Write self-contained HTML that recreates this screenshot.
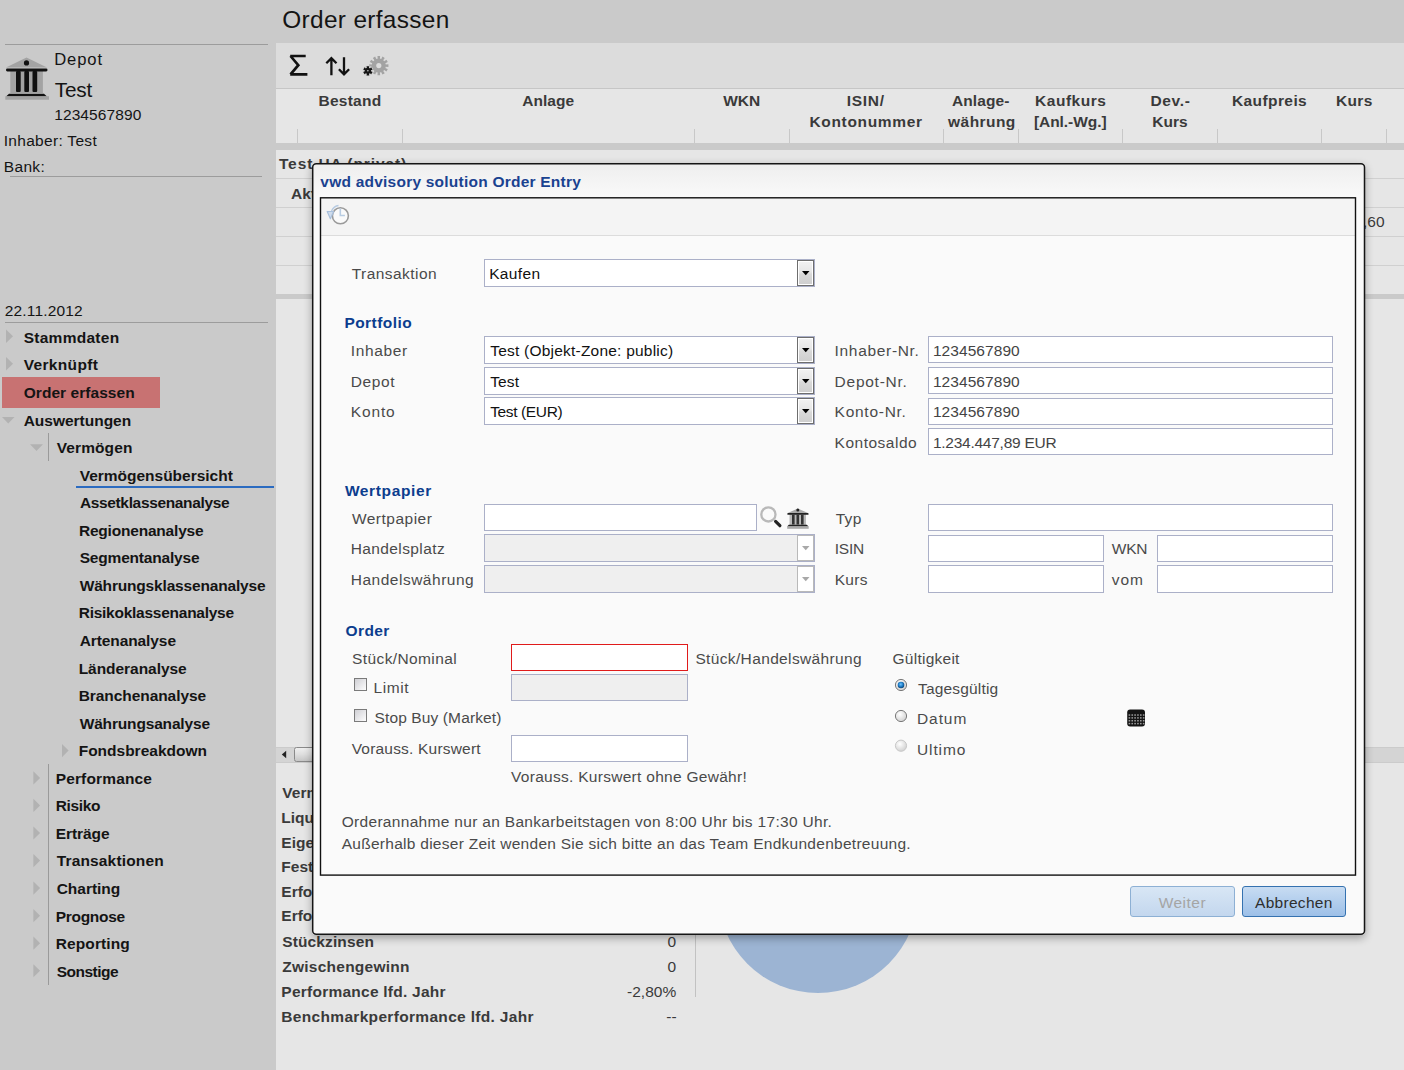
<!DOCTYPE html>
<html><head><meta charset="utf-8">
<style>
html,body{margin:0;padding:0;}
body{width:1404px;height:1070px;overflow:hidden;position:relative;background:#cacaca;font-family:"Liberation Sans",sans-serif;}
.t{position:absolute;white-space:pre;line-height:1;}
.a{position:absolute;box-sizing:border-box;}
</style></head><body>
<!-- main panels -->
<div class="a" style="left:276px;top:43px;width:1128px;height:45px;background:#dcdcdc"></div>
<div class="a" style="left:276px;top:88px;width:1128px;height:1px;background:#c6c6c6"></div>
<div class="a" style="left:276px;top:89px;width:1128px;height:54px;background:#e6e6e6"></div>
<div class="a" style="left:297px;top:129px;width:1px;height:14px;background:#c8c8c8"></div>
<div class="a" style="left:402px;top:129px;width:1px;height:14px;background:#c8c8c8"></div>
<div class="a" style="left:694px;top:129px;width:1px;height:14px;background:#c8c8c8"></div>
<div class="a" style="left:789px;top:129px;width:1px;height:14px;background:#c8c8c8"></div>
<div class="a" style="left:943px;top:129px;width:1px;height:14px;background:#c8c8c8"></div>
<div class="a" style="left:1018px;top:129px;width:1px;height:14px;background:#c8c8c8"></div>
<div class="a" style="left:1122px;top:129px;width:1px;height:14px;background:#c8c8c8"></div>
<div class="a" style="left:1217px;top:129px;width:1px;height:14px;background:#c8c8c8"></div>
<div class="a" style="left:1321px;top:129px;width:1px;height:14px;background:#c8c8c8"></div>
<div class="a" style="left:1386px;top:129px;width:1px;height:14px;background:#c8c8c8"></div>
<div class="a" style="left:276px;top:150px;width:1128px;height:144px;background:#e6e6e6"></div>
<div class="a" style="left:276px;top:178px;width:1128px;height:1px;background:#d0d0d0"></div>
<div class="a" style="left:276px;top:207px;width:1128px;height:1px;background:#d0d0d0"></div>
<div class="a" style="left:276px;top:236px;width:1128px;height:1px;background:#d0d0d0"></div>
<div class="a" style="left:276px;top:265px;width:1128px;height:1px;background:#d0d0d0"></div>
<div class="a" style="left:276px;top:299px;width:1128px;height:771px;background:#e6e6e6"></div>
<!-- scrollbar -->
<div class="a" style="left:276px;top:747px;width:1128px;height:16px;background:#d4d4d4;border-top:1px solid #cbcbcb;border-bottom:1px solid #cbcbcb"></div>
<svg class="a" style="left:276px;top:745px" width="40" height="20"><path d="M10.2 5.8 L5.8 9.5 L10.2 13.2 Z" fill="#222"/><rect x="18.5" y="2.5" width="40" height="14" rx="2" fill="url(#thg)" stroke="#8a8a8a"/>
<defs><linearGradient id="thg" x1="0" y1="0" x2="0" y2="1"><stop offset="0" stop-color="#f0f0f0"/><stop offset="0.5" stop-color="#dedede"/><stop offset="1" stop-color="#c4c4c4"/></linearGradient></defs></svg>
<!-- summary vline + pie -->
<div class="a" style="left:695px;top:780px;width:1px;height:217px;background:#c2c2c2"></div>
<div class="a" style="left:718px;top:793px;width:200px;height:200px;border-radius:50%;background:#9cb4d3"></div>
<!-- sidebar lines -->
<div class="a" style="left:5px;top:44px;width:263px;height:1px;background:#9c9c9c"></div>
<div class="a" style="left:10px;top:176px;width:252px;height:1px;background:#9c9c9c"></div>
<div class="a" style="left:5px;top:322px;width:263px;height:1px;background:#9c9c9c"></div>
<div class="a" style="left:2px;top:377px;width:158px;height:31px;background:#c87272"></div>
<div class="a" style="left:76px;top:486px;width:198px;height:2px;background:#2b6bc0"></div>
<div class="a" style="left:48px;top:433px;width:1px;height:28px;background:#9a9a9a"></div>
<div class="a" style="left:48px;top:764px;width:1px;height:221px;background:#9a9a9a"></div>
<svg class="a" style="left:0;top:320px" width="80" height="680">
<g fill="#b2b2b2">
<path d="M6 9.5 L13 16.2 L6 23 Z"/>
<path d="M6 37 L13 43.8 L6 50.6 Z"/>
<path d="M2 97 L14.5 97 L8.25 103.6 Z"/>
<path d="M30 124.3 L43 124.3 L36.5 131 Z"/>
<path d="M62 424 L68.6 430.6 L62 437.2 Z"/>
</g>
<g fill="#b2b2b2"><path d="M33.4 451.30 L40.1 457.90 L33.4 464.50 Z"/><path d="M33.4 478.85 L40.1 485.45 L33.4 492.05 Z"/><path d="M33.4 506.40 L40.1 513.00 L33.4 519.60 Z"/><path d="M33.4 533.95 L40.1 540.55 L33.4 547.15 Z"/><path d="M33.4 561.50 L40.1 568.10 L33.4 574.70 Z"/><path d="M33.4 589.05 L40.1 595.65 L33.4 602.25 Z"/><path d="M33.4 616.60 L40.1 623.20 L33.4 629.80 Z"/><path d="M33.4 644.15 L40.1 650.75 L33.4 657.35 Z"/></g>
</svg>
<!-- bank icon -->
<svg class="a" style="left:0;top:52px" width="54" height="54" viewBox="0 0 54 54">
<path d="M26.5 5.6 L47 15.6 L6 15.6 Z" fill="#a3a3a3"/>
<circle cx="26.5" cy="10.9" r="2.6" fill="#111"/>
<rect x="10.3" y="19" width="32.6" height="22" fill="#a3a3a3"/>
<rect x="6" y="16.6" width="41.5" height="2.8" rx="1.3" fill="#111"/>
<rect x="16" y="19" width="4.7" height="21" rx="1" fill="#111"/>
<rect x="24.3" y="19" width="4.7" height="21" rx="1" fill="#111"/>
<rect x="32.5" y="19" width="4.7" height="21" rx="1" fill="#111"/>
<path d="M9 41.8 L44 41.8 L47 44.4 L6 44.4 Z" fill="#111"/>
<rect x="5.3" y="44.2" width="43.7" height="3.5" fill="#a3a3a3"/>
</svg>
<!-- toolbar icons -->
<svg class="a" style="left:284px;top:50px" width="110" height="32" viewBox="0 0 110 32">
<path d="M6.2 6 L21.7 6 M6.2 24.3 L23.4 24.3 M6.5 6 L14.3 15.2 L6.5 24.3" fill="none" stroke="#111" stroke-width="2.7" stroke-linejoin="miter"/>
<path d="M47.4 8.2 L47.4 25.2 M42.3 13.3 L47.4 8.2 L52.5 13.3" fill="none" stroke="#111" stroke-width="2.3"/>
<path d="M60 7.3 L60 24.3 M54.9 19.2 L60 24.3 L65.1 19.2" fill="none" stroke="#111" stroke-width="2.3"/>
<path d="M101.56 13.79 L101.71 14.47 L104.41 14.28 L104.41 16.92 L101.71 16.73 L101.56 17.41 L101.35 18.07 L103.78 19.27 L102.46 21.55 L100.22 20.03 L99.75 20.55 L99.23 21.02 L100.75 23.26 L98.47 24.58 L97.27 22.15 L96.61 22.36 L95.93 22.51 L96.12 25.21 L93.48 25.21 L93.67 22.51 L92.99 22.36 L92.33 22.15 L91.13 24.58 L88.85 23.26 L90.37 21.02 L89.85 20.55 L89.38 20.03 L87.14 21.55 L85.82 19.27 L88.25 18.07 L88.04 17.41 L87.89 16.73 L85.19 16.92 L85.19 14.28 L87.89 14.47 L88.04 13.79 L88.25 13.13 L85.82 11.93 L87.14 9.65 L89.38 11.17 L89.85 10.65 L90.37 10.18 L88.85 7.94 L91.13 6.62 L92.33 9.05 L92.99 8.84 L93.67 8.69 L93.48 5.99 L96.12 5.99 L95.93 8.69 L96.61 8.84 L97.27 9.05 L98.47 6.62 L100.75 7.94 L99.23 10.18 L99.75 10.65 L100.22 11.17 L102.46 9.65 L103.78 11.93 L101.35 13.13 Z M97.40 15.60 A2.6 2.6 0 1 0 92.20 15.60 A2.6 2.6 0 1 0 97.40 15.60 Z" fill="#a3a3a3" fill-rule="evenodd"/><circle cx="83.9" cy="20.8" r="5.4" fill="#d2d2d2"/><path d="M82.35 18.12 L82.87 17.88 L82.54 16.20 L85.26 16.20 L84.93 17.88 L85.45 18.12 L85.91 18.44 L87.20 17.32 L88.57 19.68 L86.95 20.24 L87.00 20.80 L86.95 21.36 L88.57 21.92 L87.20 24.28 L85.91 23.16 L85.45 23.48 L84.93 23.72 L85.26 25.40 L82.54 25.40 L82.87 23.72 L82.35 23.48 L81.89 23.16 L80.60 24.28 L79.23 21.92 L80.85 21.36 L80.80 20.80 L80.85 20.24 L79.23 19.68 L80.60 17.32 L81.89 18.44 Z M84.70 20.80 A0.8 0.8 0 1 0 83.10 20.80 A0.8 0.8 0 1 0 84.70 20.80 Z" fill="#151515" fill-rule="evenodd"/>
</svg>

<div class="t" style="left:282.3px;top:7.9px;font-size:24.4px;font-weight:normal;color:#141414;letter-spacing:0.330px">Order erfassen</div>
<div class="t" style="left:54.2px;top:51.9px;font-size:16.6px;font-weight:normal;color:#141414;letter-spacing:0.883px">Depot</div>
<div class="t" style="left:54.7px;top:79.9px;font-size:20.8px;font-weight:normal;color:#141414;letter-spacing:-0.154px">Test</div>
<div class="t" style="left:54.2px;top:106.5px;font-size:15.5px;font-weight:normal;color:#141414;letter-spacing:0.102px">1234567890</div>
<div class="t" style="left:3.7px;top:133.0px;font-size:15.5px;font-weight:normal;color:#141414;letter-spacing:0.308px">Inhaber: Test</div>
<div class="t" style="left:3.7px;top:158.5px;font-size:15.5px;font-weight:normal;color:#141414;letter-spacing:0.368px">Bank:</div>
<div class="t" style="left:4.7px;top:303.0px;font-size:15.5px;font-weight:normal;color:#141414;letter-spacing:0.177px">22.11.2012</div>
<div class="t" style="left:23.7px;top:329.9px;font-size:15.5px;font-weight:bold;color:#141414;letter-spacing:0.272px">Stammdaten</div>
<div class="t" style="left:23.7px;top:357.4px;font-size:15.5px;font-weight:bold;color:#141414;letter-spacing:0.335px">Verknüpft</div>
<div class="t" style="left:23.7px;top:385.0px;font-size:15.5px;font-weight:bold;color:#141414;letter-spacing:0.053px">Order erfassen</div>
<div class="t" style="left:23.7px;top:412.5px;font-size:15.5px;font-weight:bold;color:#141414;letter-spacing:-0.016px">Auswertungen</div>
<div class="t" style="left:56.7px;top:440.1px;font-size:15.5px;font-weight:bold;color:#141414;letter-spacing:0.104px">Vermögen</div>
<div class="t" style="left:79.7px;top:467.6px;font-size:15.5px;font-weight:bold;color:#141414;letter-spacing:-0.010px">Vermögensübersicht</div>
<div class="t" style="left:79.9px;top:495.2px;font-size:15.5px;font-weight:bold;color:#141414;letter-spacing:-0.347px">Assetklassenanalyse</div>
<div class="t" style="left:78.9px;top:522.8px;font-size:15.5px;font-weight:bold;color:#141414;letter-spacing:-0.198px">Regionenanalyse</div>
<div class="t" style="left:79.7px;top:550.3px;font-size:15.5px;font-weight:bold;color:#141414;letter-spacing:-0.186px">Segmentanalyse</div>
<div class="t" style="left:79.7px;top:577.9px;font-size:15.5px;font-weight:bold;color:#141414;letter-spacing:-0.176px">Währungsklassenanalyse</div>
<div class="t" style="left:78.7px;top:605.4px;font-size:15.5px;font-weight:bold;color:#141414;letter-spacing:-0.255px">Risikoklassenanalyse</div>
<div class="t" style="left:79.7px;top:633.0px;font-size:15.5px;font-weight:bold;color:#141414;letter-spacing:-0.094px">Artenanalyse</div>
<div class="t" style="left:78.7px;top:660.5px;font-size:15.5px;font-weight:bold;color:#141414;letter-spacing:-0.044px">Länderanalyse</div>
<div class="t" style="left:78.7px;top:688.0px;font-size:15.5px;font-weight:bold;color:#141414;letter-spacing:-0.068px">Branchenanalyse</div>
<div class="t" style="left:79.7px;top:715.6px;font-size:15.5px;font-weight:bold;color:#141414;letter-spacing:-0.166px">Währungsanalyse</div>
<div class="t" style="left:78.7px;top:743.1px;font-size:15.5px;font-weight:bold;color:#141414;letter-spacing:-0.004px">Fondsbreakdown</div>
<div class="t" style="left:55.7px;top:770.7px;font-size:15.5px;font-weight:bold;color:#141414;letter-spacing:0.146px">Performance</div>
<div class="t" style="left:55.7px;top:798.2px;font-size:15.5px;font-weight:bold;color:#141414;letter-spacing:-0.349px">Risiko</div>
<div class="t" style="left:55.7px;top:825.8px;font-size:15.5px;font-weight:bold;color:#141414;letter-spacing:-0.059px">Erträge</div>
<div class="t" style="left:56.7px;top:853.4px;font-size:15.5px;font-weight:bold;color:#141414;letter-spacing:0.157px">Transaktionen</div>
<div class="t" style="left:56.7px;top:880.9px;font-size:15.5px;font-weight:bold;color:#141414;letter-spacing:-0.021px">Charting</div>
<div class="t" style="left:55.7px;top:908.5px;font-size:15.5px;font-weight:bold;color:#141414;letter-spacing:-0.295px">Prognose</div>
<div class="t" style="left:55.7px;top:936.0px;font-size:15.5px;font-weight:bold;color:#141414;letter-spacing:0.110px">Reporting</div>
<div class="t" style="left:56.7px;top:963.5px;font-size:15.5px;font-weight:bold;color:#141414;letter-spacing:-0.504px">Sonstige</div>
<div class="t" style="left:318.5px;top:92.7px;font-size:15.5px;font-weight:bold;color:#3a3a3a;letter-spacing:0.253px">Bestand</div>
<div class="t" style="left:522.3px;top:92.7px;font-size:15.5px;font-weight:bold;color:#3a3a3a;letter-spacing:0.009px">Anlage</div>
<div class="t" style="left:723.3px;top:92.7px;font-size:15.5px;font-weight:bold;color:#3a3a3a;letter-spacing:-0.062px">WKN</div>
<div class="t" style="left:846.7px;top:92.7px;font-size:15.5px;font-weight:bold;color:#3a3a3a;letter-spacing:0.714px">ISIN/</div>
<div class="t" style="left:809.5px;top:114.3px;font-size:15.5px;font-weight:bold;color:#3a3a3a;letter-spacing:0.662px">Kontonummer</div>
<div class="t" style="left:952.0px;top:92.7px;font-size:15.5px;font-weight:bold;color:#3a3a3a;letter-spacing:0.087px">Anlage-</div>
<div class="t" style="left:948.1px;top:114.3px;font-size:15.5px;font-weight:bold;color:#3a3a3a;letter-spacing:0.431px">währung</div>
<div class="t" style="left:1035.1px;top:92.7px;font-size:15.5px;font-weight:bold;color:#3a3a3a;letter-spacing:0.519px">Kaufkurs</div>
<div class="t" style="left:1033.9px;top:114.3px;font-size:15.5px;font-weight:bold;color:#3a3a3a;letter-spacing:-0.056px">[Anl.-Wg.]</div>
<div class="t" style="left:1150.5px;top:92.7px;font-size:15.5px;font-weight:bold;color:#3a3a3a;letter-spacing:0.652px">Dev.-</div>
<div class="t" style="left:1152.2px;top:114.3px;font-size:15.5px;font-weight:bold;color:#3a3a3a;letter-spacing:0.069px">Kurs</div>
<div class="t" style="left:1232.0px;top:92.7px;font-size:15.5px;font-weight:bold;color:#3a3a3a;letter-spacing:0.404px">Kaufpreis</div>
<div class="t" style="left:1336.0px;top:92.7px;font-size:15.5px;font-weight:bold;color:#3a3a3a;letter-spacing:0.335px">Kurs</div>
<div class="t" style="left:278.9px;top:156.4px;font-size:15.5px;font-weight:bold;color:#3a3a3a;letter-spacing:0.914px">Test HA (privat)</div>
<div class="t" style="left:291.1px;top:185.7px;font-size:15.5px;font-weight:bold;color:#3a3a3a;letter-spacing:0.000px">Aktien</div>
<div class="t" style="right:19.4px;top:213.5px;font-size:15.5px;font-weight:normal;color:#3a3a3a">1.234,60</div>
<div class="t" style="left:282.3px;top:784.5px;font-size:15.5px;font-weight:bold;color:#3a3a3a;letter-spacing:0.000px">Vermögen</div>
<div class="t" style="left:281.3px;top:809.7px;font-size:15.5px;font-weight:bold;color:#3a3a3a;letter-spacing:0.000px">Liquidität</div>
<div class="t" style="left:281.3px;top:835.0px;font-size:15.5px;font-weight:bold;color:#3a3a3a;letter-spacing:0.000px">Eigenkapital</div>
<div class="t" style="left:281.3px;top:858.8px;font-size:15.5px;font-weight:bold;color:#3a3a3a;letter-spacing:0.000px">Festgeld</div>
<div class="t" style="left:281.3px;top:884.0px;font-size:15.5px;font-weight:bold;color:#3a3a3a;letter-spacing:0.000px">Erfolg realisiert</div>
<div class="t" style="left:281.3px;top:907.8px;font-size:15.5px;font-weight:bold;color:#3a3a3a;letter-spacing:0.000px">Erfolg unrealisiert</div>
<div class="t" style="left:282.3px;top:933.5px;font-size:15.5px;font-weight:bold;color:#3a3a3a;letter-spacing:0.113px">Stückzinsen</div>
<div class="t" style="left:282.3px;top:958.5px;font-size:15.5px;font-weight:bold;color:#3a3a3a;letter-spacing:0.243px">Zwischengewinn</div>
<div class="t" style="left:281.3px;top:983.8px;font-size:15.5px;font-weight:bold;color:#3a3a3a;letter-spacing:0.244px">Performance lfd. Jahr</div>
<div class="t" style="left:281.3px;top:1008.8px;font-size:15.5px;font-weight:bold;color:#3a3a3a;letter-spacing:0.321px">Benchmarkperformance lfd. Jahr</div>
<div class="t" style="right:728.0px;top:933.5px;font-size:15.5px;font-weight:normal;color:#3a3a3a">0</div>
<div class="t" style="right:728.0px;top:958.5px;font-size:15.5px;font-weight:normal;color:#3a3a3a">0</div>
<div class="t" style="right:727.8px;top:983.8px;font-size:15.5px;font-weight:normal;color:#3a3a3a">-2,80%</div>
<div class="t" style="right:727.4px;top:1008.8px;font-size:15.5px;font-weight:normal;color:#3a3a3a">--</div>
<div class="a" style="left:312px;top:163px;width:1053px;height:772px;border-radius:4px;box-shadow:0 3px 8px rgba(0,0,0,0.33);background:linear-gradient(#eeeeee 0px,#f8f8f8 30px,#fafafa 36px,#fafafa 100%)"></div>
<div class="a" style="left:321px;top:198px;width:1034px;height:677px;background:#fafafa"></div>
<div class="a" style="left:321px;top:198px;width:1034px;height:38px;background:#f4f4f4;border-bottom:1px solid #dcdcdc"></div>
<svg class="a" style="left:0;top:0" width="1404" height="1070"><rect x="312.7" y="163.8" width="1051.8" height="770.4" rx="3.5" fill="none" stroke="#151515" stroke-width="1.5"/><rect x="320.5" y="197.8" width="1035" height="677.3" fill="none" stroke="#111" stroke-width="1.4"/></svg>
<svg class="a" style="left:322px;top:200px" width="34" height="34" viewBox="0 0 34 34">
<circle cx="18.4" cy="15.8" r="8.0" fill="#fafafa" stroke="#9a9a9a" stroke-width="1.6"/>
<path d="M18.3 8.5 L18.3 15.5 L22.9 15.5" fill="none" stroke="#b9cde3" stroke-width="1.6"/>
<path d="M5.2 11.5 L11.6 11.5 L8.4 18.8 Z" fill="#cfdcec" stroke="#a9c0dc" stroke-width="1.2" stroke-linejoin="round"/>
<path d="M9.5 11 Q12 6 16.5 5.6" fill="none" stroke="#b7cbe2" stroke-width="1.5"/>
</svg>
<div class="a" style="left:484px;top:259px;width:331px;height:28px;border:1px solid #abb0c8;background:#fff"></div><div class="a" style="left:797px;top:260px;width:17px;height:26px;border:1px solid #6e6e6e;background:#fff"></div><div class="a" style="left:799px;top:262px;width:13px;height:22px;background:linear-gradient(#f1f1f1 0%,#e6e6e6 45%,#d9d9d9 55%,#cfcfcf 100%)"></div><svg class="a" style="left:802px;top:271px" width="8" height="5"><path d="M0 0 L7.5 0 L3.75 4.3 Z" fill="#000"/></svg>
<div class="a" style="left:484px;top:336px;width:331px;height:28px;border:1px solid #abb0c8;background:#fff"></div><div class="a" style="left:797px;top:337px;width:17px;height:26px;border:1px solid #6e6e6e;background:#fff"></div><div class="a" style="left:799px;top:339px;width:13px;height:22px;background:linear-gradient(#f1f1f1 0%,#e6e6e6 45%,#d9d9d9 55%,#cfcfcf 100%)"></div><svg class="a" style="left:802px;top:348px" width="8" height="5"><path d="M0 0 L7.5 0 L3.75 4.3 Z" fill="#000"/></svg>
<div class="a" style="left:484px;top:367px;width:331px;height:28px;border:1px solid #abb0c8;background:#fff"></div><div class="a" style="left:797px;top:368px;width:17px;height:26px;border:1px solid #6e6e6e;background:#fff"></div><div class="a" style="left:799px;top:370px;width:13px;height:22px;background:linear-gradient(#f1f1f1 0%,#e6e6e6 45%,#d9d9d9 55%,#cfcfcf 100%)"></div><svg class="a" style="left:802px;top:379px" width="8" height="5"><path d="M0 0 L7.5 0 L3.75 4.3 Z" fill="#000"/></svg>
<div class="a" style="left:484px;top:397px;width:331px;height:28px;border:1px solid #abb0c8;background:#fff"></div><div class="a" style="left:797px;top:398px;width:17px;height:26px;border:1px solid #6e6e6e;background:#fff"></div><div class="a" style="left:799px;top:400px;width:13px;height:22px;background:linear-gradient(#f1f1f1 0%,#e6e6e6 45%,#d9d9d9 55%,#cfcfcf 100%)"></div><svg class="a" style="left:802px;top:409px" width="8" height="5"><path d="M0 0 L7.5 0 L3.75 4.3 Z" fill="#000"/></svg>
<div class="a" style="left:928px;top:336px;width:405px;height:27px;border:1px solid #abb0c8;background:#fff"></div>
<div class="a" style="left:928px;top:367px;width:405px;height:27px;border:1px solid #abb0c8;background:#fff"></div>
<div class="a" style="left:928px;top:398px;width:405px;height:27px;border:1px solid #abb0c8;background:#fff"></div>
<div class="a" style="left:928px;top:428px;width:405px;height:27px;border:1px solid #abb0c8;background:#fff"></div>
<div class="a" style="left:484px;top:504px;width:273px;height:27px;border:1px solid #abb0c8;background:#fff"></div>
<div class="a" style="left:484px;top:534px;width:331px;height:28px;border:1px solid #abb0c8;background:#efefef"></div><div class="a" style="left:797px;top:535px;width:17px;height:26px;border:1px solid #b9b9b9;background:#fff"></div><div class="a" style="left:799px;top:537px;width:13px;height:22px;background:#fff"></div><svg class="a" style="left:802px;top:546px" width="8" height="5"><path d="M0 0 L7.5 0 L3.75 4.3 Z" fill="#a8a8a8"/></svg>
<div class="a" style="left:484px;top:565px;width:331px;height:28px;border:1px solid #abb0c8;background:#efefef"></div><div class="a" style="left:797px;top:566px;width:17px;height:26px;border:1px solid #b9b9b9;background:#fff"></div><div class="a" style="left:799px;top:568px;width:13px;height:22px;background:#fff"></div><svg class="a" style="left:802px;top:577px" width="8" height="5"><path d="M0 0 L7.5 0 L3.75 4.3 Z" fill="#a8a8a8"/></svg>
<div class="a" style="left:928px;top:504px;width:405px;height:27px;border:1px solid #abb0c8;background:#fff"></div>
<div class="a" style="left:928px;top:535px;width:176px;height:27px;border:1px solid #abb0c8;background:#fff"></div>
<div class="a" style="left:1157px;top:535px;width:176px;height:27px;border:1px solid #abb0c8;background:#fff"></div>
<div class="a" style="left:928px;top:565px;width:176px;height:28px;border:1px solid #abb0c8;background:#fff"></div>
<div class="a" style="left:1157px;top:565px;width:176px;height:28px;border:1px solid #abb0c8;background:#fff"></div>
<div class="a" style="left:511px;top:644px;width:177px;height:27px;border:1.5px solid #e01b1b;background:#fff"></div>
<div class="a" style="left:511px;top:674px;width:177px;height:27px;border:1px solid #abb0c8;background:#efefef"></div>
<div class="a" style="left:511px;top:735px;width:177px;height:27px;border:1px solid #abb0c8;background:#fff"></div>
<div class="a" style="left:354px;top:678px;width:13px;height:13px;border:1px solid #7a7a7a;background:linear-gradient(135deg,#cfcfd4,#fdfdfd)"></div>
<div class="a" style="left:354px;top:709px;width:13px;height:13px;border:1px solid #7a7a7a;background:linear-gradient(135deg,#cfcfd4,#fdfdfd)"></div>
<svg class="a" style="left:890px;top:675px" width="24" height="82" viewBox="0 0 24 82">
<defs><radialGradient id="rg" cx="0.4" cy="0.35" r="0.7"><stop offset="0" stop-color="#fff"/><stop offset="1" stop-color="#cfcfcf"/></radialGradient>
<radialGradient id="rb" cx="0.45" cy="0.4" r="0.6"><stop offset="0" stop-color="#6ec3ff"/><stop offset="0.6" stop-color="#1a78c2"/><stop offset="1" stop-color="#0b3f6e"/></radialGradient></defs>
<circle cx="11" cy="10" r="5.6" fill="url(#rg)" stroke="#7a7a7a" stroke-width="1"/>
<circle cx="11" cy="10" r="3.3" fill="url(#rb)"/>
<circle cx="11" cy="41" r="5.6" fill="url(#rg)" stroke="#7a7a7a" stroke-width="1"/>
<circle cx="11" cy="70.7" r="5.6" fill="url(#rg)" stroke="#c8c8c8" stroke-width="1"/>
</svg>
<svg class="a" style="left:1126px;top:708px" width="20" height="20" viewBox="0 0 20 20"><rect x="1.2" y="1.6" width="17.8" height="16.8" rx="3" fill="#141414"/><rect x="2.60" y="6.30" width="1.6" height="1.5" fill="#9a9a9a"/><rect x="5.45" y="6.30" width="1.6" height="1.5" fill="#9a9a9a"/><rect x="8.30" y="6.30" width="1.6" height="1.5" fill="#9a9a9a"/><rect x="11.15" y="6.30" width="1.6" height="1.5" fill="#9a9a9a"/><rect x="14.00" y="6.30" width="1.6" height="1.5" fill="#9a9a9a"/><rect x="16.85" y="6.30" width="1.6" height="1.5" fill="#9a9a9a"/><rect x="2.60" y="9.15" width="1.6" height="1.5" fill="#9a9a9a"/><rect x="5.45" y="9.15" width="1.6" height="1.5" fill="#9a9a9a"/><rect x="8.30" y="9.15" width="1.6" height="1.5" fill="#9a9a9a"/><rect x="11.15" y="9.15" width="1.6" height="1.5" fill="#9a9a9a"/><rect x="14.00" y="9.15" width="1.6" height="1.5" fill="#9a9a9a"/><rect x="16.85" y="9.15" width="1.6" height="1.5" fill="#9a9a9a"/><rect x="2.60" y="12.00" width="1.6" height="1.5" fill="#9a9a9a"/><rect x="5.45" y="12.00" width="1.6" height="1.5" fill="#9a9a9a"/><rect x="8.30" y="12.00" width="1.6" height="1.5" fill="#9a9a9a"/><rect x="11.15" y="12.00" width="1.6" height="1.5" fill="#9a9a9a"/><rect x="14.00" y="12.00" width="1.6" height="1.5" fill="#9a9a9a"/><rect x="16.85" y="12.00" width="1.6" height="1.5" fill="#9a9a9a"/><rect x="2.60" y="14.85" width="1.6" height="1.5" fill="#9a9a9a"/><rect x="5.45" y="14.85" width="1.6" height="1.5" fill="#9a9a9a"/><rect x="8.30" y="14.85" width="1.6" height="1.5" fill="#9a9a9a"/><rect x="11.15" y="14.85" width="1.6" height="1.5" fill="#9a9a9a"/><rect x="14.00" y="14.85" width="1.6" height="1.5" fill="#9a9a9a"/><rect x="16.85" y="14.85" width="1.6" height="1.5" fill="#9a9a9a"/></svg>
<svg class="a" style="left:756px;top:502px" width="58" height="30" viewBox="0 0 58 30">
<circle cx="12.4" cy="12.4" r="7.1" fill="none" stroke="#b9b9b9" stroke-width="2.3"/>
<path d="M19.6 19.4 L23.9 23.7" stroke="#222" stroke-width="3.2" stroke-linecap="round"/>
<path d="M41.8 6.4 L52.5 11.2 L31.2 11.2 Z" fill="#a9a9a9"/>
<circle cx="41.8" cy="8.0" r="1.5" fill="#222"/>
<rect x="33.5" y="12" width="16.5" height="11" fill="#b9b9b9"/>
<rect x="31.3" y="11" width="21.3" height="1.8" rx="0.9" fill="#222"/>
<rect x="36" y="12.5" width="2.6" height="10" fill="#333"/>
<rect x="40.5" y="12.5" width="2.6" height="10" fill="#333"/>
<rect x="45" y="12.5" width="2.6" height="10" fill="#333"/>
<path d="M32.8 22.8 L50.8 22.8 L52.6 24.5 L31.2 24.5 Z" fill="#222"/>
<rect x="31.2" y="24.4" width="21.5" height="2.4" fill="#a9a9a9"/>
</svg>
<div class="a" style="left:1130px;top:886px;width:105px;height:31px;border:1px solid #8db0d4;border-radius:3px;background:linear-gradient(#d8e6f5,#c3d7ee)"></div>
<div class="a" style="left:1242px;top:886px;width:104px;height:31px;border:1px solid #3572b0;border-radius:3px;background:linear-gradient(#c8dcf2,#9dc0e8)"></div>
<div class="t" style="left:320.3px;top:174.0px;font-size:15.5px;font-weight:bold;color:#1a4290;letter-spacing:0.228px">vwd advisory solution Order Entry</div>
<div class="t" style="left:351.7px;top:266.1px;font-size:15.5px;font-weight:normal;color:#4a4a4a;letter-spacing:0.451px">Transaktion</div>
<div class="t" style="left:489.2px;top:266.1px;font-size:15.5px;font-weight:normal;color:#111;letter-spacing:0.339px">Kaufen</div>
<div class="t" style="left:344.4px;top:315.1px;font-size:15.5px;font-weight:bold;color:#0c3d8e;letter-spacing:0.457px">Portfolio</div>
<div class="t" style="left:350.7px;top:342.9px;font-size:15.5px;font-weight:normal;color:#4a4a4a;letter-spacing:0.665px">Inhaber</div>
<div class="t" style="left:350.7px;top:373.7px;font-size:15.5px;font-weight:normal;color:#4a4a4a;letter-spacing:0.636px">Depot</div>
<div class="t" style="left:350.7px;top:404.4px;font-size:15.5px;font-weight:normal;color:#4a4a4a;letter-spacing:0.879px">Konto</div>
<div class="t" style="left:490.2px;top:342.9px;font-size:15.5px;font-weight:normal;color:#111;letter-spacing:0.220px">Test (Objekt-Zone: public)</div>
<div class="t" style="left:490.2px;top:373.7px;font-size:15.5px;font-weight:normal;color:#111;letter-spacing:0.127px">Test</div>
<div class="t" style="left:490.2px;top:404.4px;font-size:15.5px;font-weight:normal;color:#111;letter-spacing:-0.369px">Test (EUR)</div>
<div class="t" style="left:834.6px;top:342.9px;font-size:15.5px;font-weight:normal;color:#4a4a4a;letter-spacing:0.677px">Inhaber-Nr.</div>
<div class="t" style="left:834.6px;top:373.7px;font-size:15.5px;font-weight:normal;color:#4a4a4a;letter-spacing:0.735px">Depot-Nr.</div>
<div class="t" style="left:834.6px;top:404.4px;font-size:15.5px;font-weight:normal;color:#4a4a4a;letter-spacing:0.729px">Konto-Nr.</div>
<div class="t" style="left:834.6px;top:434.7px;font-size:15.5px;font-weight:normal;color:#4a4a4a;letter-spacing:0.496px">Kontosaldo</div>
<div class="t" style="left:932.9px;top:342.9px;font-size:15.5px;font-weight:normal;color:#444;letter-spacing:0.069px">1234567890</div>
<div class="t" style="left:932.9px;top:373.7px;font-size:15.5px;font-weight:normal;color:#444;letter-spacing:0.069px">1234567890</div>
<div class="t" style="left:932.9px;top:404.4px;font-size:15.5px;font-weight:normal;color:#444;letter-spacing:0.069px">1234567890</div>
<div class="t" style="left:932.9px;top:434.7px;font-size:15.5px;font-weight:normal;color:#444;letter-spacing:-0.249px">1.234.447,89 EUR</div>
<div class="t" style="left:344.9px;top:482.8px;font-size:15.5px;font-weight:bold;color:#0c3d8e;letter-spacing:0.628px">Wertpapier</div>
<div class="t" style="left:351.9px;top:510.8px;font-size:15.5px;font-weight:normal;color:#4a4a4a;letter-spacing:0.493px">Wertpapier</div>
<div class="t" style="left:350.7px;top:540.8px;font-size:15.5px;font-weight:normal;color:#4a4a4a;letter-spacing:0.395px">Handelsplatz</div>
<div class="t" style="left:350.7px;top:571.6px;font-size:15.5px;font-weight:normal;color:#4a4a4a;letter-spacing:0.515px">Handelswährung</div>
<div class="t" style="left:835.7px;top:510.8px;font-size:15.5px;font-weight:normal;color:#4a4a4a;letter-spacing:0.319px">Typ</div>
<div class="t" style="left:834.7px;top:540.8px;font-size:15.5px;font-weight:normal;color:#4a4a4a;letter-spacing:-0.184px">ISIN</div>
<div class="t" style="left:834.7px;top:571.6px;font-size:15.5px;font-weight:normal;color:#4a4a4a;letter-spacing:0.293px">Kurs</div>
<div class="t" style="left:1111.8px;top:540.8px;font-size:15.5px;font-weight:normal;color:#4a4a4a;letter-spacing:-0.284px">WKN</div>
<div class="t" style="left:1111.8px;top:571.6px;font-size:15.5px;font-weight:normal;color:#4a4a4a;letter-spacing:0.915px">vom</div>
<div class="t" style="left:345.5px;top:622.9px;font-size:15.5px;font-weight:bold;color:#0c3d8e;letter-spacing:0.406px">Order</div>
<div class="t" style="left:352.1px;top:650.7px;font-size:15.5px;font-weight:normal;color:#4a4a4a;letter-spacing:0.385px">Stück/Nominal</div>
<div class="t" style="left:373.5px;top:679.7px;font-size:15.5px;font-weight:normal;color:#4a4a4a;letter-spacing:0.595px">Limit</div>
<div class="t" style="left:374.5px;top:710.0px;font-size:15.5px;font-weight:normal;color:#4a4a4a;letter-spacing:0.123px">Stop Buy (Market)</div>
<div class="t" style="left:351.7px;top:741.0px;font-size:15.5px;font-weight:normal;color:#4a4a4a;letter-spacing:0.196px">Vorauss. Kurswert</div>
<div class="t" style="left:695.4px;top:650.7px;font-size:15.5px;font-weight:normal;color:#4a4a4a;letter-spacing:0.359px">Stück/Handelswährung</div>
<div class="t" style="left:511.1px;top:769.0px;font-size:15.5px;font-weight:normal;color:#4a4a4a;letter-spacing:0.281px">Vorauss. Kurswert ohne Gewähr!</div>
<div class="t" style="left:892.5px;top:650.7px;font-size:15.5px;font-weight:normal;color:#4a4a4a;letter-spacing:0.255px">Gültigkeit</div>
<div class="t" style="left:918.0px;top:680.5px;font-size:15.5px;font-weight:normal;color:#4a4a4a;letter-spacing:0.180px">Tagesgültig</div>
<div class="t" style="left:917.0px;top:711.4px;font-size:15.5px;font-weight:normal;color:#4a4a4a;letter-spacing:0.915px">Datum</div>
<div class="t" style="left:917.0px;top:741.8px;font-size:15.5px;font-weight:normal;color:#4a4a4a;letter-spacing:0.880px">Ultimo</div>
<div class="t" style="left:341.7px;top:813.5px;font-size:15.5px;font-weight:normal;color:#4a4a4a;letter-spacing:0.313px">Orderannahme nur an Bankarbeitstagen von 8:00 Uhr bis 17:30 Uhr.</div>
<div class="t" style="left:341.7px;top:836.0px;font-size:15.5px;font-weight:normal;color:#4a4a4a;letter-spacing:0.275px">Außerhalb dieser Zeit wenden Sie sich bitte an das Team Endkundenbetreuung.</div>
<div class="t" style="left:1158.7px;top:895.3px;font-size:15.5px;font-weight:normal;color:#a5a5a5;letter-spacing:0.472px">Weiter</div>
<div class="t" style="left:1255.0px;top:895.3px;font-size:15.5px;font-weight:normal;color:#2e2e2e;letter-spacing:0.294px">Abbrechen</div>
</body></html>
